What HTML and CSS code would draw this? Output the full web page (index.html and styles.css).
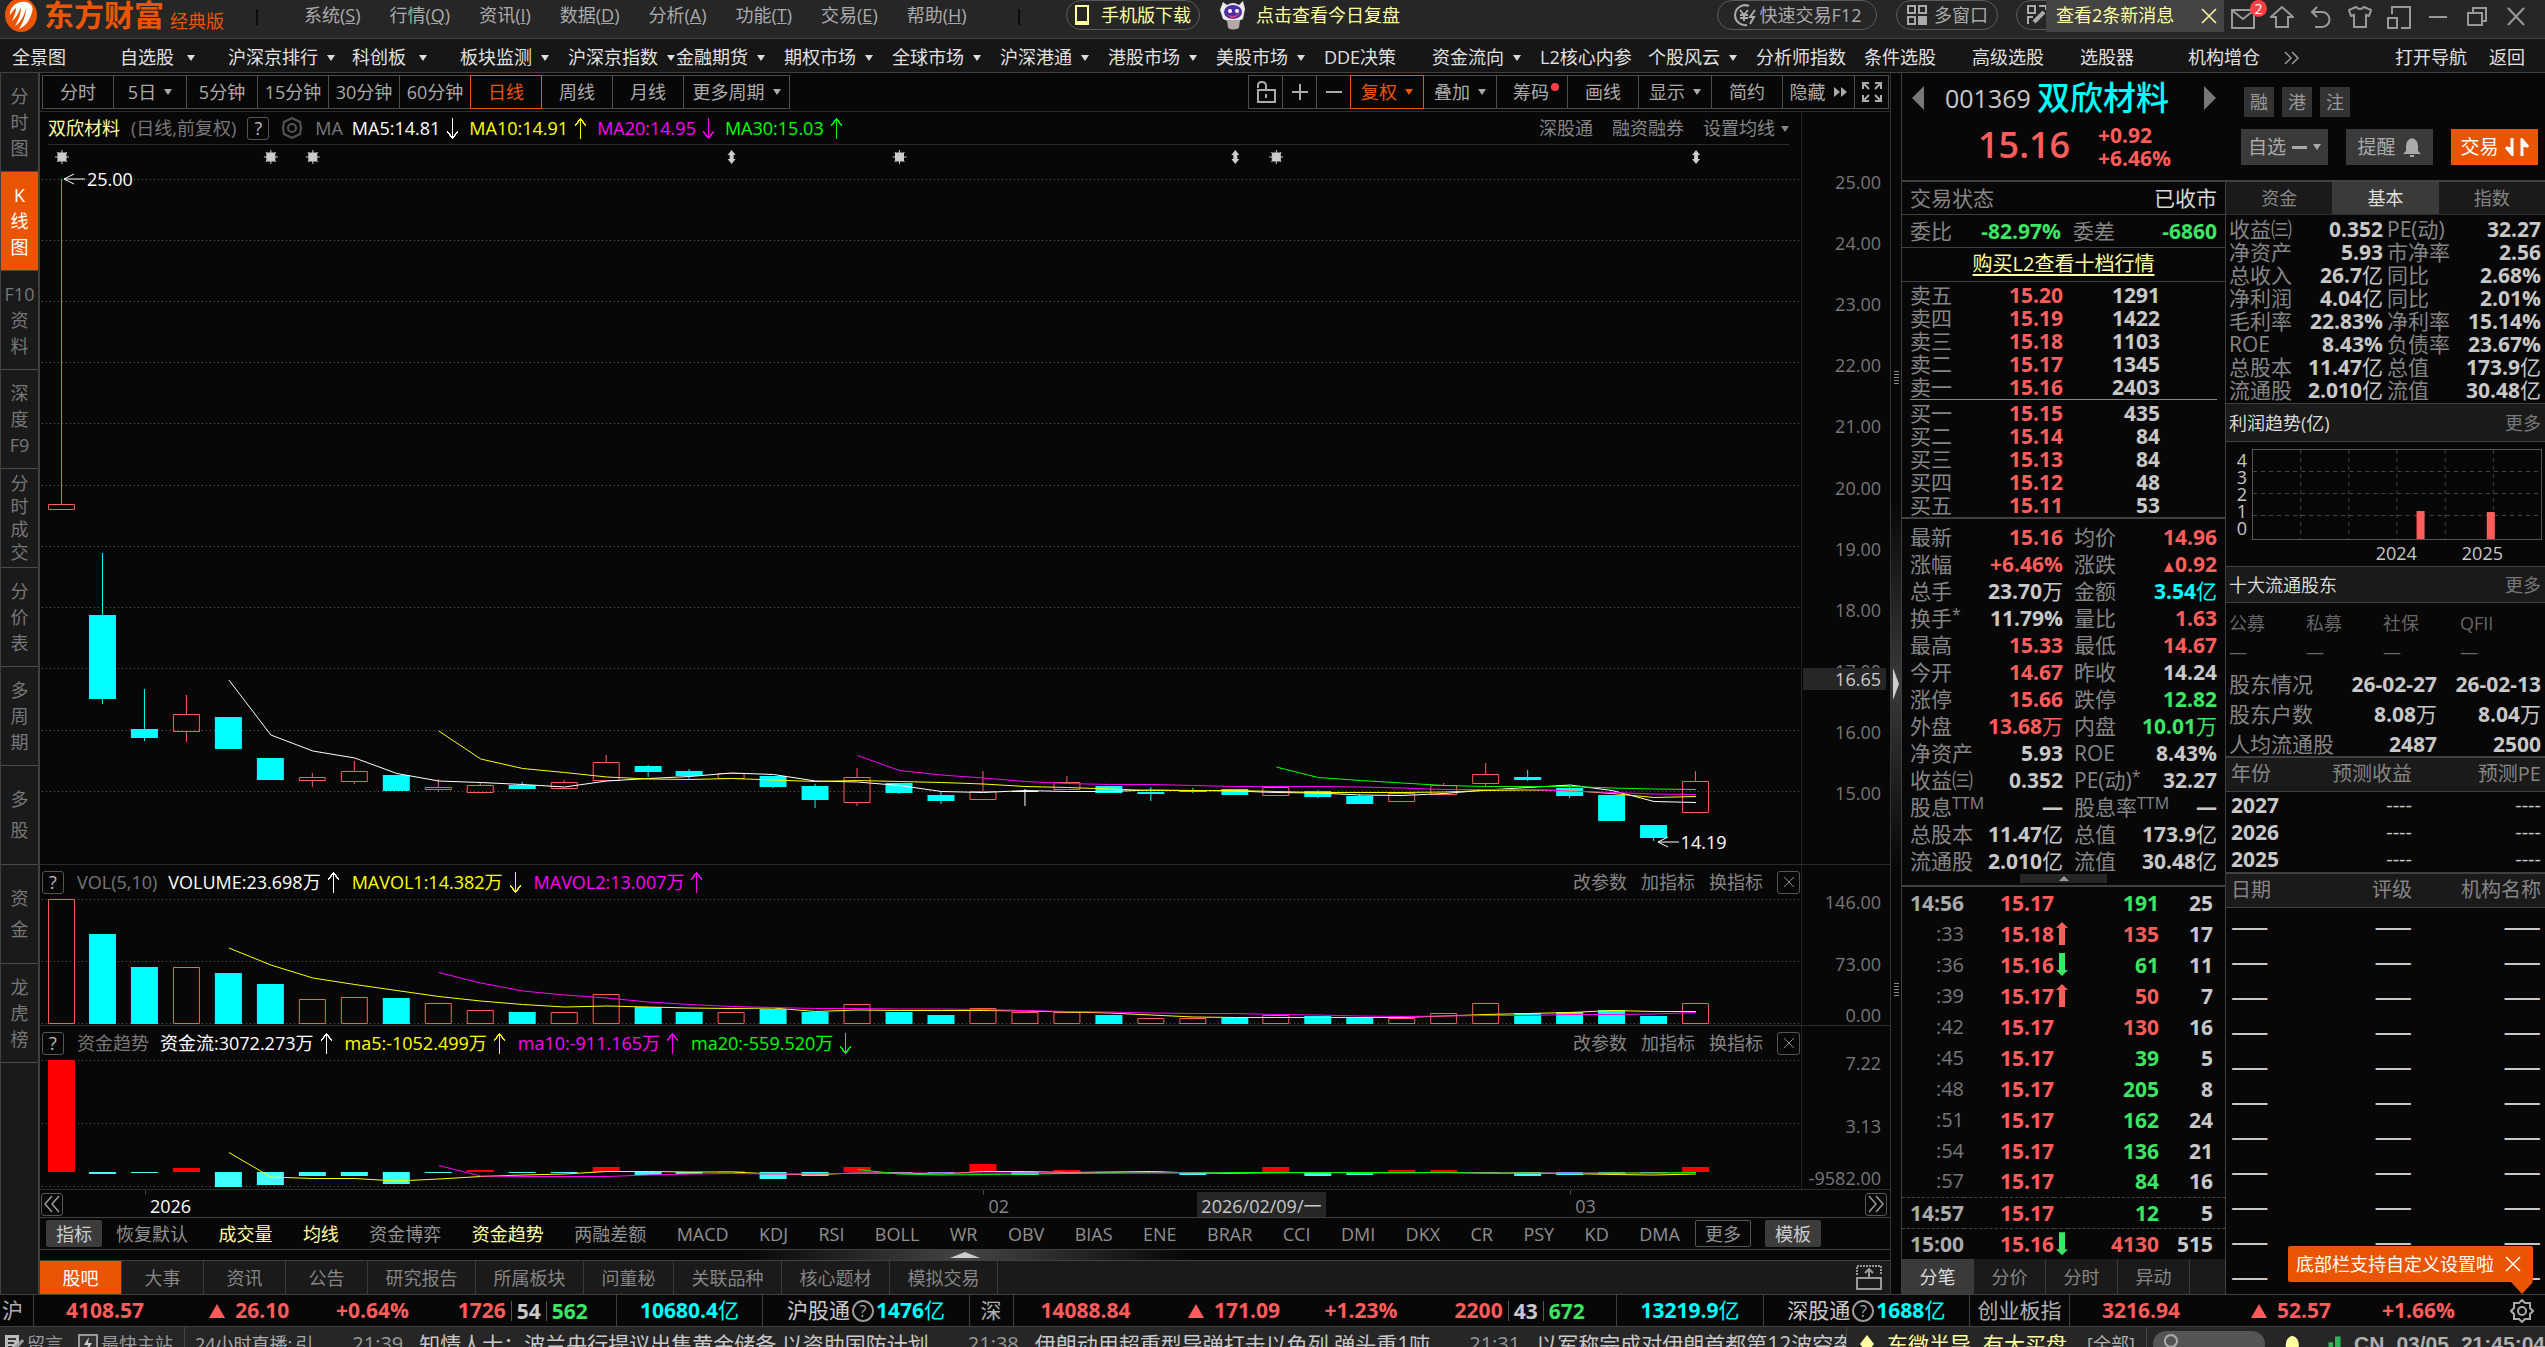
FILE: index.html
```html
<!DOCTYPE html>
<html lang="zh-CN">
<head>
<meta charset="utf-8">
<title>东方财富 经典版</title>
<link rel="stylesheet" href="styles.css">
</head>
<body>
<div class="app">
<header class="topbar">
  <svg class="logo" viewBox="0 0 34 34"><ellipse cx="17" cy="15" rx="16" ry="17" fill="#ea5504"/><path d="M6 15C5 8 13 0 22 2C27 3 30 7 28 12C26 20 22 26 15 29C20 21 22 14 22 8C20 16 17 22 11 26C15 19 17 13 17 7C14 14 12 18 8 21C11 15 12 11 12 8C9 10 8 12 6 15Z" fill="#fff"/></svg>
  <strong class="brand">东方财富</strong><span class="edition">经典版</span>
  <i class="bar"></i>
  <nav class="menu">
    <a href="#">系统(<u>S</u>)</a><a href="#">行情(<u>Q</u>)</a><a href="#">资讯(<u>I</u>)</a><a href="#">数据(<u>D</u>)</a><a href="#">分析(<u>A</u>)</a><a href="#">功能(<u>T</u>)</a><a href="#">交易(<u>E</u>)</a><a href="#">帮助(<u>H</u>)</a>
  </nav>
  <i class="bar"></i>
  <button class="pill pill-phone"><svg width="14" height="20" viewBox="0 0 14 20"><path d="M1 1H13V17H1ZM1 17H13V19H1Z" fill="none" stroke="#ffffa0" stroke-width="2"/></svg>手机版下载</button>
  <a class="review" href="#"><svg width="30" height="30" viewBox="0 0 30 30"><path d="M5 2L9 5Q15 1 21 5L25 1L27 9L25 19Q15 25 5 19L2 10Z" fill="#ece8ee"/><path d="M9 20L22 20L21 28Q15 31 10 28Z" fill="#b5a7a5"/><ellipse cx="15" cy="12" rx="9" ry="7" fill="#4a2fa0"/><path d="M8 13Q15 20 23 11Q19 19 13 18Z" fill="#d2407a"/><circle cx="12" cy="11" r="2" fill="#fff"/><circle cx="19" cy="11" r="2" fill="#fff"/></svg>点击查看今日复盘</a>
  <div class="top-right">
    <button class="pill pill-trade"><svg width="24" height="24" viewBox="0 0 24 24" fill="none" stroke="#aaa" stroke-width="2"><path d="M16 3A10 10 0 1 0 14 22"/><path d="M7 7L11 12L15 7M11 12V18M7 12H15M7 15H15M22 7L17 14H21L17 21"/></svg>快速交易F12</button>
    <button class="pill pill-multi"><svg width="22" height="22" viewBox="0 0 22 22" fill="none" stroke="#aaa" stroke-width="2"><path d="M2 2H9V9H2ZM13 2H20V9H13ZM2 13H9V20H2Z"/><path d="M13 13H20V20H13Z" fill="#aaa"/></svg>多窗口</button>
    <div class="notice-wrap">
      <button class="pill pill-edit" aria-label="编辑"><svg width="22" height="22" viewBox="0 0 22 22" fill="none" stroke="#aaa" stroke-width="2"><path d="M2 2H9V9H2ZM13 2H20V6M2 20V13H7"/><path d="M8 18L18 8" stroke-width="4"/></svg></button>
      <div class="notice"><span>查看2条新消息</span><button class="plain" aria-label="关闭"><svg width="16" height="16" viewBox="0 0 16 16"><path d="M1 1L15 15M15 1L1 15" stroke="#ffffa0" stroke-width="1.5"/></svg></button></div>
    </div>
    <div class="win-icons">
      <button class="plain mail" aria-label="消息"><svg viewBox="0 0 24 24"><path d="M1 5H23V23H1ZM2 6L12 14L22 6"/></svg><em>2</em></button>
      <button class="plain" aria-label="首页"><svg viewBox="0 0 24 24"><path d="M12 2L1 12H6V22H18V12H23Z"/></svg></button>
      <button class="plain" aria-label="后退"><svg viewBox="0 0 24 24"><path d="M3 7H13A7 7 0 0 1 13 22H6M8 2L3 7L8 12"/></svg></button>
      <button class="plain" aria-label="皮肤"><svg viewBox="0 0 24 24"><path d="M8 2Q12 6 16 2L23 5L21 11L18 10V22H6V10L3 11L1 5Z"/></svg></button>
      <button class="plain" aria-label="布局"><svg viewBox="0 0 24 24"><path d="M5 9V2H23V23H14M1 13H10V23H1Z"/></svg></button>
      <button class="plain" aria-label="最小化"><svg viewBox="0 0 24 24"><path d="M3 12H21"/></svg></button>
      <button class="plain" aria-label="还原"><svg viewBox="0 0 24 24"><path d="M3 8H17V20H3ZM8 8V3H21V16H17"/></svg></button>
      <button class="plain" aria-label="关闭"><svg viewBox="0 0 24 24"><path d="M4 3L20 20M20 3L4 20"/></svg></button>
    </div>
  </div>
</header>

<nav class="market-nav">
  <a href="#">全景图</a><a href="#" class="drop far">自选股</a><a href="#" class="drop wide">沪深京排行</a><a href="#" class="drop far">科创板</a><a href="#" class="drop">板块监测</a><a href="#" class="drop">沪深京指数</a><a href="#" class="drop">金融期货</a><a href="#" class="drop">期权市场</a><a href="#" class="drop">全球市场</a><a href="#" class="drop">沪深港通</a><a href="#" class="drop">港股市场</a><a href="#" class="drop">美股市场</a><a href="#">DDE决策</a><a href="#" class="drop">资金流向</a><a href="#">L2核心内参</a><a href="#" class="drop">个股风云</a><a href="#">分析师指数</a><a href="#">条件选股</a><a href="#">高级选股</a><a href="#">选股器</a><a href="#">机构增仓</a>
  <button class="plain more" aria-label="更多"><svg width="16" height="14" viewBox="0 0 16 14"><path d="M1 1L7 7L1 13M8 1L14 7L8 13" fill="none" stroke="#999" stroke-width="1.5"/></svg></button>
  <span class="nav-end"><a href="#">打开导航</a><a href="#">返回</a></span>
</nav>

<main class="main">
  <aside class="rail">
    <a href="#">分<br>时<br>图</a>
    <a href="#" class="on">K<br>线<br>图</a>
    <a href="#">F10<br>资<br>料</a>
    <a href="#">深<br>度<br>F9</a>
    <a href="#" class="four">分<br>时<br>成<br>交</a>
    <a href="#">分<br>价<br>表</a>
    <a href="#">多<br>周<br>期</a>
    <a href="#" class="two">多<br>股</a>
    <a href="#" class="two">资<br>金</a>
    <a href="#">龙<br>虎<br>榜</a>
  </aside>

  <section class="charts">
    <div class="toolbar">
      <div class="seg">
        <button>分时</button><button class="w73">5日<i class="caret"></i></button><button>5分钟</button><button>15分钟</button><button>30分钟</button><button>60分钟</button><button class="on">日线</button><button>周线</button><button>月线</button><button class="w106">更多周期<i class="caret"></i></button>
      </div>
      <div class="seg">
        <button class="sq" aria-label="锁定"><svg width="22" height="24" viewBox="0 0 22 24" fill="none" stroke="#aaa" stroke-width="2"><path d="M3 10H20V22H3ZM11 14V18M3 8V5Q3 2 7 2Q11 2 11 6V10"/></svg></button><button class="sq" aria-label="放大"><svg width="18" height="18" viewBox="0 0 18 18"><path d="M9 1V17M1 9H17" stroke="#aaa" stroke-width="2"/></svg></button><button class="sq" aria-label="缩小"><svg width="18" height="18" viewBox="0 0 18 18"><path d="M1 9H17" stroke="#aaa" stroke-width="2"/></svg></button><button class="w73 on">复权<i class="caret"></i></button><button class="w73">叠加<i class="caret"></i></button><button class="dot">筹码</button><button>画线</button><button class="w73">显示<i class="caret"></i></button><button>简约</button><button class="w72">隐藏<svg width="14" height="10" viewBox="0 0 14 10"><path d="M0 0L6 5L0 10ZM7 0L13 5L7 10Z" fill="#aaa"/></svg></button><button class="sq" aria-label="全屏"><svg width="22" height="22" viewBox="0 0 22 22" fill="none" stroke="#aaa" stroke-width="2"><path d="M2 8V2H8M2 2L8 8M14 2H20V8M20 2L14 8M2 14V20H8M2 20L8 14M20 14V20H14M20 20L14 14"/></svg></button>
      </div>
    </div>

    <div class="panel panel-k">
      <div class="plot">
        <div class="legend ruled">
          <span class="pale">双欣材料</span><span class="dim">(日线,前复权)</span><button class="q">?</button>
          <svg class="gear" viewBox="0 0 24 24"><path d="M12 2L16 4L20 6L21 12L20 18L16 20L12 22L8 20L4 18L3 12L4 6L8 4Z"/><circle cx="12" cy="12" r="4"/></svg>
          <span class="dim">MA</span><span class="white arrow down">MA5:14.81</span><span class="yellow arrow up">MA10:14.91</span><span class="magenta arrow down">MA20:14.95</span><span class="lime arrow up">MA30:15.03</span>
          <span class="tools wide"><a href="#">深股通</a><a href="#">融资融券</a><a href="#">设置均线<i class="caret"></i></a></span>
        </div>
        <div class="canvas">
          <svg id="kline" viewBox="40 145 1762 719" preserveAspectRatio="none"></svg>
          <span class="note note-high"><svg width="22" height="14" viewBox="0 0 22 14"><path d="M11 2L1 7L11 12M1 7H22"/></svg>25.00</span>
          <span class="note note-low"><svg width="22" height="14" viewBox="0 0 22 14"><path d="M11 2L1 7L11 12M1 7H22"/></svg>14.19</span>
        </div>
      </div>
      <div class="axis axis-k"><span>25.00</span><span>24.00</span><span>23.00</span><span>22.00</span><span>21.00</span><span>20.00</span><span>19.00</span><span>18.00</span><span>17.00</span><span>16.00</span><span>15.00</span><b class="cross">16.65</b></div>
    </div>

    <div class="panel">
      <div class="plot">
        <div class="legend">
          <button class="q">?</button><span class="dim">VOL(5,10)</span><span class="white arrow up">VOLUME:23.698万</span><span class="yellow arrow down">MAVOL1:14.382万</span><span class="magenta arrow up">MAVOL2:13.007万</span>
          <span class="tools"><a href="#">改参数</a><a href="#">加指标</a><a href="#">换指标</a><button class="q" aria-label="关闭"><svg width="12" height="12" viewBox="0 0 12 12"><path d="M1 1L11 11M11 1L1 11" stroke="#888"/></svg></button></span>
        </div>
        <div class="canvas vol"><svg id="volume" viewBox="40 899 1762 126" preserveAspectRatio="none"></svg></div>
      </div>
      <div class="axis axis-vol"><span>146.00</span><span>73.00</span><span>0.00</span></div>
    </div>

    <div class="panel">
      <div class="plot">
        <div class="legend">
          <button class="q">?</button><span class="dim">资金趋势</span><span class="white arrow up">资金流:3072.273万</span><span class="yellow arrow up">ma5:-1052.499万</span><span class="magenta arrow up">ma10:-911.165万</span><span class="lime arrow down">ma20:-559.520万</span>
          <span class="tools"><a href="#">改参数</a><a href="#">加指标</a><a href="#">换指标</a><button class="q" aria-label="关闭"><svg width="12" height="12" viewBox="0 0 12 12"><path d="M1 1L11 11M11 1L1 11" stroke="#888"/></svg></button></span>
        </div>
        <div class="canvas flow"><svg id="flow" viewBox="40 1060 1762 129" preserveAspectRatio="none"></svg></div>
      </div>
      <div class="axis axis-flow"><span>7.22</span><span>3.13</span><span>-9582.00</span></div>
    </div>

    <div class="dates">
      <button class="q" aria-label="向前"><svg width="16" height="18" viewBox="0 0 16 18"><path d="M8 1L1 9L8 17M15 1L8 9L15 17" fill="none" stroke="#999" stroke-width="1.5"/></svg></button>
      <span class="d-year">2026</span><span class="d-feb">02</span><span class="d-sel">2026/02/09/一</span><span class="d-mar">03</span>
      <button class="q" aria-label="向后"><svg width="16" height="18" viewBox="0 0 16 18"><path d="M1 1L8 9L1 17M8 1L15 9L8 17" fill="none" stroke="#999" stroke-width="1.5"/></svg></button>
    </div>

    <div class="indicators">
      <button class="solid">指标</button>
      <div class="ind-list"><a href="#">恢复默认</a><a href="#" class="pale">成交量</a><a href="#" class="pale">均线</a><a href="#">资金博弈</a><a href="#" class="pale">资金趋势</a><a href="#">两融差额</a><a href="#">MACD</a><a href="#">KDJ</a><a href="#">RSI</a><a href="#">BOLL</a><a href="#">WR</a><a href="#">OBV</a><a href="#">BIAS</a><a href="#">ENE</a><a href="#">BRAR</a><a href="#">CCI</a><a href="#">DMI</a><a href="#">DKX</a><a href="#">CR</a><a href="#">PSY</a><a href="#">KD</a><a href="#">DMA</a></div>
      <button class="outline">更多</button><button class="solid">模板</button>
    </div>
    <div class="splitter"><i></i></div>
    <div class="tabs">
      <button class="on">股吧</button><button>大事</button><button>资讯</button><button>公告</button><button class="four">研究报告</button><button class="four">所属板块</button><button class="three">问董秘</button><button class="four">关联品种</button><button class="four">核心题材</button><button class="four">模拟交易</button>
      <svg class="export" width="26" height="26" viewBox="0 0 26 26" fill="none" stroke="#999" stroke-width="2"><path d="M1 10V1H25V10" stroke-dasharray="2 1"/><path d="M1 13H25V24H1ZM13 13V4M9 8L13 4L17 8"/></svg>
    </div>
  </section>

  <div class="divider"><i class="grip"></i><i class="fold"></i><i class="grip"></i></div>

  <section class="side">
    <div class="stock-head">
      <div class="ident">
        <div class="name-row"><button class="plain prev" aria-label="上一只"></button><span class="code">001369</span><h1>双欣材料</h1><button class="plain next" aria-label="下一只"></button></div>
        <div class="price-row up"><span class="last">15.16</span><span class="chg">+0.92<br>+6.46%</span></div>
      </div>
      <div class="actions">
        <div class="tags"><span>融</span><span>港</span><span>注</span></div>
        <div class="btns"><button>自选<i class="minus"></i><i class="caret"></i></button><button>提醒<svg width="20" height="20" viewBox="0 0 20 20"><path d="M10 1Q16 3 16 9V14L19 17H1L4 14V9Q4 3 10 1ZM8 18H12V20H8Z" fill="#aaa"/></svg></button><button class="trade">交易<svg width="24" height="18" viewBox="0 0 24 18"><path d="M7 0V15M1 9L7 16L7 9M17 18V3M23 9L17 2L17 9" fill="#fff" stroke="#fff" stroke-width="3"/></svg></button></div>
      </div>
    </div>

    <div class="quote-col">
      <div class="line-row"><span>交易状态</span><span class="val">已收市</span></div>
      <div class="line-row four"><span>委比</span><b class="down">-82.97%</b><span>委差</span><b class="down">-6860</b></div>
      <div class="line-row center"><a href="#">购买L2查看十档行情</a></div>
      <table class="book">
        <tr><th>卖五</th><td>15.20</td><td>1291</td></tr>
        <tr><th>卖四</th><td>15.19</td><td>1422</td></tr>
        <tr><th>卖三</th><td>15.18</td><td>1103</td></tr>
        <tr><th>卖二</th><td>15.17</td><td>1345</td></tr>
        <tr><th>卖一</th><td>15.16</td><td>2403</td></tr>
      </table>
      <hr>
      <table class="book buy">
        <tr><th>买一</th><td>15.15</td><td>435</td></tr>
        <tr><th>买二</th><td>15.14</td><td>84</td></tr>
        <tr><th>买三</th><td>15.13</td><td>84</td></tr>
        <tr><th>买四</th><td>15.12</td><td>48</td></tr>
        <tr><th>买五</th><td>15.11</td><td>53</td></tr>
      </table>
      <table class="facts">
        <tr><th>最新</th><td class="up">15.16</td><th>均价</th><td class="up">14.96</td></tr>
        <tr><th>涨幅</th><td class="up">+6.46%</td><th>涨跌</th><td class="up"><i class="tri small"></i>0.92</td></tr>
        <tr><th>总手</th><td>23.70<s>万</s></td><th>金额</th><td class="cyan">3.54<s>亿</s></td></tr>
        <tr><th>换手<sup>*</sup></th><td>11.79%</td><th>量比</th><td class="up">1.63</td></tr>
        <tr><th>最高</th><td class="up">15.33</td><th>最低</th><td class="up">14.67</td></tr>
        <tr><th>今开</th><td class="up">14.67</td><th>昨收</th><td>14.24</td></tr>
        <tr><th>涨停</th><td class="up">15.66</td><th>跌停</th><td class="down">12.82</td></tr>
        <tr><th>外盘</th><td class="up">13.68<s>万</s></td><th>内盘</th><td class="down">10.01<s>万</s></td></tr>
        <tr><th>净资产</th><td>5.93</td><th>ROE</th><td>8.43%</td></tr>
        <tr><th>收益㈢</th><td>0.352</td><th>PE(动)<sup>*</sup></th><td>32.27</td></tr>
        <tr><th>股息<sup>TTM</sup></th><td>—</td><th>股息率<sup>TTM</sup></th><td>—</td></tr>
        <tr><th>总股本</th><td>11.47<s>亿</s></td><th>总值</th><td>173.9<s>亿</s></td></tr>
        <tr><th>流通股</th><td>2.010<s>亿</s></td><th>流值</th><td>30.48<s>亿</s></td></tr>
      </table>
      <div class="collapse"><button class="plain" aria-label="收起"><i></i></button></div>
      <table class="ticks">
        <tr class="minute"><td>14:56</td><td>15.17</td><td></td><td class="down">191</td><td>25</td></tr>
        <tr><td>:33</td><td>15.18</td><td><i class="tick-up"></i></td><td class="up">135</td><td>17</td></tr>
        <tr><td>:36</td><td>15.16</td><td><i class="tick-down"></i></td><td class="down">61</td><td>11</td></tr>
        <tr><td>:39</td><td>15.17</td><td><i class="tick-up"></i></td><td class="up">50</td><td>7</td></tr>
        <tr><td>:42</td><td>15.17</td><td></td><td class="up">130</td><td>16</td></tr>
        <tr><td>:45</td><td>15.17</td><td></td><td class="down">39</td><td>5</td></tr>
        <tr><td>:48</td><td>15.17</td><td></td><td class="down">205</td><td>8</td></tr>
        <tr><td>:51</td><td>15.17</td><td></td><td class="down">162</td><td>24</td></tr>
        <tr><td>:54</td><td>15.17</td><td></td><td class="down">136</td><td>21</td></tr>
        <tr><td>:57</td><td>15.17</td><td></td><td class="down">84</td><td>16</td></tr>
        <tr class="minute"><td>14:57</td><td>15.17</td><td></td><td class="down">12</td><td>5</td></tr>
        <tr class="minute"><td>15:00</td><td>15.16</td><td><i class="tick-down"></i></td><td class="up">4130</td><td>515</td></tr>
      </table>
      <div class="sub-tabs"><button class="on">分笔</button><button>分价</button><button>分时</button><button>异动</button></div>
    </div>

    <div class="info-col">
      <div class="info-tabs"><button>资金</button><button class="on">基本</button><button>指数</button></div>
      <table class="basic">
        <tr><th>收益㈢</th><td>0.352</td><th>PE(动)</th><td>32.27</td></tr>
        <tr><th>净资产</th><td>5.93</td><th>市净率</th><td>2.56</td></tr>
        <tr><th>总收入</th><td>26.7<s>亿</s></td><th>同比</th><td>2.68%</td></tr>
        <tr><th>净利润</th><td>4.04<s>亿</s></td><th>同比</th><td>2.01%</td></tr>
        <tr><th>毛利率</th><td>22.83%</td><th>净利率</th><td>15.14%</td></tr>
        <tr><th>ROE</th><td>8.43%</td><th>负债率</th><td>23.67%</td></tr>
        <tr><th>总股本</th><td>11.47<s>亿</s></td><th>总值</th><td>173.9<s>亿</s></td></tr>
        <tr><th>流通股</th><td>2.010<s>亿</s></td><th>流值</th><td>30.48<s>亿</s></td></tr>
      </table>
      <div class="sec-head"><span>利润趋势(亿)</span><a href="#">更多</a></div>
      <div class="profit">
        <div class="profit-y"><span>4</span><span>3</span><span>2</span><span>1</span><span>0</span></div>
        <svg viewBox="0 0 290 91" preserveAspectRatio="none"><g stroke="#444" stroke-dasharray="4 4"><path d="M1 22.5H289M1 44.5H289M1 66.5H289M48.5 1V90M96.5 1V90M144.5 1V90M192.5 1V90M240.5 1V90"/></g><path d="M.5 .5H288.5V90.5H.5Z" fill="none" stroke="#555"/><path d="M164 62H172V90H164ZM234 63H242V90H234Z" fill="#ff5c5c"/></svg>
        <div class="profit-x"><span>2024</span><span>2025</span></div>
      </div>
      <div class="sec-head holders-head"><span>十大流通股东</span><a href="#">更多</a></div>
      <div class="holders"><span>公募</span><span>私募</span><span>社保</span><span>QFII</span><span>—</span><span>—</span><span>—</span><span>—</span></div>
      <table class="owners">
        <tr><th>股东情况</th><td>26-02-27</td><td>26-02-13</td></tr>
        <tr><th>股东户数</th><td>8.08<s>万</s></td><td>8.04<s>万</s></td></tr>
        <tr><th>人均流通股</th><td>2487</td><td>2500</td></tr>
      </table>
      <table class="forecast">
        <thead><tr><th>年份</th><th>预测收益</th><th>预测PE</th></tr></thead>
        <tbody><tr><td>2027</td><td>----</td><td>----</td></tr><tr><td>2026</td><td>----</td><td>----</td></tr><tr><td>2025</td><td>----</td><td>----</td></tr></tbody>
      </table>
      <table class="forecast ratings">
        <thead><tr><th>日期</th><th>评级</th><th>机构名称</th></tr></thead>
        <tbody>
          <tr><td>——</td><td>——</td><td>——</td></tr><tr><td>——</td><td>——</td><td>——</td></tr><tr><td>——</td><td>——</td><td>——</td></tr><tr><td>——</td><td>——</td><td>——</td></tr><tr><td>——</td><td>——</td><td>——</td></tr><tr><td>——</td><td>——</td><td>——</td></tr><tr><td>——</td><td>——</td><td>——</td></tr><tr><td>——</td><td>——</td><td>——</td></tr><tr><td>——</td><td>——</td><td>——</td></tr><tr><td>——</td><td>——</td><td>——</td></tr><tr><td>——</td><td>——</td><td>——</td></tr>
        </tbody>
      </table>
    </div>
  </section>
</main>

<div class="indices">
  <div class="cell nm first">沪</div>
  <div class="cell quote up"><b>4108.57</b><b><i class="tri"></i>26.10</b><b>+0.64%</b></div>
  <div class="cell breadth"><b class="up">1726</b><b>54</b><b class="down">562</b></div>
  <div class="cell amount cyan"><b>10680.4</b>亿</div>
  <div class="cell link">沪股通<i class="help">?</i><span class="cyan"><b>1476</b>亿</span></div>
  <div class="cell nm">深</div>
  <div class="cell quote big up"><b>14088.84</b><b><i class="tri"></i>171.09</b><b>+1.23%</b></div>
  <div class="cell breadth big"><b class="up">2200</b><b>43</b><b class="down">672</b></div>
  <div class="cell amount cyan"><b>13219.9</b>亿</div>
  <div class="cell link">深股通<i class="help">?</i><span class="cyan"><b>1688</b>亿</span></div>
  <div class="cell nm">创业板指</div>
  <div class="cell quote end up"><b>3216.94</b><b><i class="tri"></i>52.57</b><b>+1.66%</b></div>
  <button class="plain set" aria-label="设置"><svg class="gear lit" viewBox="0 0 24 24"><path d="M12 1L15 4H20L20 9L23 12L20 15V20H15L12 23L9 20H4V15L1 12L4 9V4H9Z"/><circle cx="12" cy="12" r="4"/></svg></button>
  <div class="callout"><span>底部栏支持自定义设置啦</span><button class="plain" aria-label="关闭"><svg width="16" height="16" viewBox="0 0 16 16"><path d="M1 1L15 15M15 1L1 15" stroke="#fff" stroke-width="1.5"/></svg></button></div>
</div>

<footer class="status">
  <div class="st st-links"><svg width="20" height="20" viewBox="0 0 20 20"><path d="M1 1H15V19H1Z" fill="#bbb"/><path d="M4 5H12M4 9H10M4 13H8" stroke="#333" stroke-width="2"/><path d="M9 17L19 6" stroke="#999" stroke-width="3"/></svg><span>留言</span><svg width="20" height="20" viewBox="0 0 20 20"><path d="M1 1H19V19H1Z" fill="#333" stroke="#999" stroke-width="2"/><path d="M11 3L6 11H10L8 18L14 9H10Z" fill="#ccc"/></svg><span>最快主站</span></div>
  <div class="st st-news"><span class="live">24小时直播:</span><span class="roll">引</span><time>21:39</time><span>知情人士：波兰央行提议出售黄金储备 以资助国防计划</span><time>21:38</time><span>伊朗动用超重型导弹打击以色列 弹头重1吨</span><time>21:31</time><span class="clip">以军称完成对伊朗首都第12波空袭</span></div>
  <div class="st st-alert"><svg width="16" height="20" viewBox="0 0 16 20"><path d="M8 1L15 10L8 19L1 10Z" fill="#ffffa0"/></svg><span>东微半导</span><span>有大买盘</span><span class="all">[全部]</span></div>
  <div class="st st-end"><label class="find"><svg width="16" height="20" viewBox="0 0 16 20"><path d="M8 1A6 6 0 1 1 7.9 1M8 13V19" fill="none" stroke="#aaa" stroke-width="2"/></svg><input type="search" aria-label="搜索"></label><svg width="20" height="20" viewBox="0 0 20 20"><path d="M10 1Q17 3 17 11V17L20 20H0L3 17V11Q3 3 10 1Z" fill="#ffffa0"/></svg><svg width="22" height="20" viewBox="0 0 22 20"><path d="M0 14H5V20H0ZM7 8H12V20H7ZM14 2H20V20H14Z" fill="#2fb457"/></svg><b>CN</b><b>03/05</b><b>21:45:04</b></div>
</footer>
</div>
<script src="charts.js"></script>
</body>
</html>
```
FILE: styles.css
```css
:root {
  --bg: #070707;
  --line: #404040;
  --dim: #858585;
  --text: #c8c8c8;
  --up: #ff5c5c;
  --down: #3ce664;
  --cyan: #00ffff;
  --pale: #ffffa0;
  --orange: #ea5504;
}
* { box-sizing: border-box; }
body {
  margin: 0;
  background: var(--bg);
  color: var(--text);
  font: 18px/24px "Open Sans", "Noto Sans CJK SC", sans-serif;
}
a { color: inherit; text-decoration: none; }
i, em { font-style: normal; }
s { text-decoration: none; font-weight: 400; }
button {
  font: inherit;
  color: inherit;
  background: none;
  border: 0;
  padding: 0;
  white-space: nowrap;
}
.plain { display: flex; align-items: center; justify-content: center; }
table { border-collapse: collapse; width: 100%; table-layout: fixed; }
th, td { padding: 0; font-weight: 400; white-space: nowrap; }
.up { color: var(--up); }
.down { color: var(--down); }
.cyan { color: var(--cyan); }
.pale { color: var(--pale); }
.dim { color: #777; }
.white { color: #fff; }
.yellow { color: #ff0; }
.magenta { color: #f0f; }
.lime { color: #0f0; }
.caret {
  display: inline-block;
  border: 4px solid transparent;
  border-top: 6px solid currentColor;
  border-bottom: 0;
}
.app { display: flex; flex-direction: column; height: 100vh; overflow: hidden; white-space: nowrap; }

/* top bar */
.topbar {
  display: flex;
  flex: none;
  height: 39px;
  background: #262626;
  border-bottom: 1px solid var(--line);
  color: #aaa;
  line-height: 30px;
}
.logo { width: 34px; height: 34px; margin-left: 4px; }
.brand { width: 126px; margin-left: 6px; font-size: 30px; color: var(--orange); }
.edition { width: 86px; padding-top: 6px; color: var(--orange); }
.bar { width: 2px; height: 16px; margin-top: 9px; background: #0c0c0c; }
.menu { display: flex; gap: 29px; width: 760px; padding-left: 46px; }
.pill {
  display: flex;
  align-items: center;
  justify-content: center;
  gap: 6px;
  height: 30px;
  border: 1px solid #5a5a5a;
  border-radius: 15px;
  flex: none;
}
.pill-phone { width: 134px; margin-left: 46px; gap: 12px; color: var(--pale); }
.review { display: flex; gap: 8px; margin-left: 18px; color: var(--pale); }
.top-right { display: flex; margin-left: auto; }
.pill-trade { width: 160px; margin-right: 19px; gap: 3px; }
.pill-multi { width: 102px; margin-right: 18px; }
.notice-wrap { display: flex; }
.pill-edit { width: 60px; margin-right: -30px; justify-content: start; padding-left: 9px; }
.notice { display: flex; justify-content: space-between; width: 178px; height: 32px; padding: 0 7px 0 10px; background: #444; color: var(--pale); z-index: 1; }
.win-icons { display: flex; gap: 15px; padding: 4px 17px 0 7px; }
.win-icons .plain { position: relative; width: 24px; height: 26px; }
.win-icons svg { width: 24px; height: 24px; fill: none; stroke: #999; stroke-width: 2; }
.mail em { position: absolute; right: -12px; top: -4px; width: 17px; height: 17px; border-radius: 9px; background: #ff4040; color: #fff; font-size: 14px; line-height: 17px; text-align: center; }

/* market navigation */
.market-nav {
  display: flex;
  flex: none;
  height: 34px;
  padding: 0 20px 0 12px;
  background: #161616;
  border-bottom: 1px solid var(--line);
  color: #e0e0e0;
  line-height: 36px;
}
.market-nav > a { flex: 0 1 108px; }
.market-nav > a.wide { flex-basis: 124px; }
.drop::after {
  content: "";
  display: inline-block;
  margin: 0 0 3px 9px;
  border: 4px solid transparent;
  border-top: 6px solid #ddd;
  border-bottom: 0;
}
.drop.far::after { margin-left: 13px; }
.market-nav .more { margin: 12px 0 0 -12px; height: 14px; }
.nav-end { display: flex; gap: 22px; margin-left: auto; }

.main { display: flex; flex: 1; min-height: 0; }

/* left rail */
.rail { flex: none; width: 40px; background: #1a1a1a; border: solid var(--line); border-width: 0 2px 0 1px; color: #777; text-align: center; }
.rail a { display: flex; flex-direction: column; justify-content: center; height: 99px; border-bottom: 1px solid #4a4a4a; line-height: 26px; }
.rail a.on { background: var(--orange); color: #fff; }
.rail a.four { line-height: 23px; }
.rail a.two { line-height: 31px; }

/* chart area */
.charts { display: flex; flex-direction: column; flex: 1; min-width: 0; }
.toolbar { display: flex; justify-content: space-between; height: 39px; padding: 2px 1px 0 3px; border-bottom: 1px solid #2c2c2c; color: #aaa; }
.seg { display: flex; }
.seg button { display: flex; align-items: center; justify-content: center; gap: 8px; width: 72px; height: 34px; border: 1px solid #4c4c4c; margin-left: -1px; }
.seg button.w72 { width: 73px; }
.seg button.w73 { width: 74px; }
.seg button.w106 { width: 107px; }
.seg button.sq { width: 35px; }
.seg button.on { border-color: var(--orange); color: var(--orange); z-index: 1; }
.dot::after { content: ""; width: 8px; height: 8px; margin: -10px -8px 0 -6px; border-radius: 4px; background: #ff4040; }
.panel { display: grid; grid-template-columns: minmax(0, 1fr) 88px; border-bottom: 1px solid #2c2c2c; }
.panel-k { flex: 1; min-height: 0; }
.plot { display: flex; flex-direction: column; min-width: 0; min-height: 0; border-right: 1px solid #222; }
.legend { display: flex; align-items: center; gap: 13px; height: 34px; padding: 0 1px 0 2px; flex: none; }
.legend.ruled { gap: 11px; height: 33px; margin: 0 12px 0 8px; padding: 0; border-bottom: 1px solid #2c2c2c; }
.q { display: flex; align-items: center; justify-content: center; width: 22px; height: 23px; border: 1px solid #555; border-radius: 3px; color: #bbb; }
.gear { width: 24px; height: 24px; fill: none; stroke: #555; stroke-width: 2; }
.gear.lit { stroke: #aaa; }
.arrow { display: flex; align-items: center; gap: 7px; }
.arrow.white { color: #fff; }
.arrow.yellow { color: #ff0; }
.arrow.magenta { color: #f0f; }
.arrow.lime { color: #0f0; }
.arrow::after {
  content: "";
  width: 11px;
  height: 21px;
  background:
    linear-gradient(currentColor, currentColor) 5px 0 / 1px 100% no-repeat,
    linear-gradient(to top right, transparent 42%, currentColor 43% 57%, transparent 58%) 0 100% / 6px 8px no-repeat,
    linear-gradient(to top left, transparent 42%, currentColor 43% 57%, transparent 58%) 5px 100% / 6px 8px no-repeat;
}
.arrow.up::after { transform: rotate(180deg); }
.legend .dim + .arrow { margin-left: -2px; }
.tools { display: flex; align-items: center; gap: 14px; margin-left: auto; color: #858585; }
.tools.wide { gap: 19px; }
.tools .q { width: 23px; }
.tools .caret { margin: 0 0 3px 6px; }
.canvas { position: relative; flex: 1; min-height: 0; }
.canvas.vol { flex: 0 0 126px; }
.canvas.flow { flex: 0 0 129px; }
.canvas > svg { display: block; width: 100%; height: 100%; }
.canvas path { vector-effect: non-scaling-stroke; }
.note { position: absolute; display: flex; align-items: center; gap: 2px; color: #fff; transform: translateY(-50%); }
.note svg { fill: none; stroke: #fff; }
.note-high { left: 1.3%; top: 4.7%; }
.note-low { left: 91.8%; top: 96.9%; }
.axis { position: relative; padding-right: 9px; text-align: right; color: #777; }
.axis-k { display: flex; flex-direction: column; padding-top: 39px; padding-bottom: 40px; }
.axis-k span { display: flex; flex: 1; align-items: center; justify-content: flex-end; }
.cross { position: absolute; left: 1px; right: 4px; top: 74%; padding-right: 5px; background: #262626; color: #ccc; font-weight: 400; line-height: 22px; }
.axis-vol { display: grid; grid-template-rows: 62px 51px 22px; padding-top: 25px; }
.axis-flow { display: grid; grid-template-rows: 63px 52px 23px; padding-top: 25px; }
.axis-flow span { margin-left: -10px; }
.dates { display: grid; grid-template-columns: 104fr 839fr 214fr 373fr 295fr 23px; align-items: center; height: 28px; padding: 0 2px 0 1px; border-bottom: 1px solid var(--line); color: #858585; }
.dates span { height: 28px; padding: 4px 0 0 5px; background: linear-gradient(#444, #444) 0 0 / 1px 5px no-repeat; }
.dates .d-year { color: #fff; }
.dates .d-sel { justify-self: start; height: 25px; padding: 2px 4px 0; background: #262626; color: var(--text); }
.indicators { display: flex; align-items: center; height: 32px; padding: 0 69px 0 6px; border-bottom: 1px solid var(--line); color: #909090; }
.indicators button { width: 56px; height: 27px; border-radius: 2px; }
.ind-list { display: flex; flex: 1; justify-content: space-between; padding: 0 15px 0 14px; }
.solid { background: #3c3c3c; color: #ccc; }
.indicators .outline { border: 1px solid #555; margin-right: 14px; }
.splitter { display: flex; justify-content: center; align-items: center; height: 11px; background: linear-gradient(90deg, transparent 38%, #444 50%, transparent 62%); border-bottom: 1px solid var(--line); }
.splitter i { border: 15px solid transparent; border-top: 0; border-bottom: 6px solid #ccc; }
.tabs { display: flex; height: 33px; background: #1a1a1a; color: #858585; }
.tabs button { width: 82px; border-right: 1px solid #3a3a3a; }
.tabs .three { width: 90px; }
.tabs .four { width: 108px; }
.tabs .on { background: var(--orange); color: #fff; }
.export { margin: 4px 8px 0 auto; }

.divider { display: flex; flex: none; flex-direction: column; justify-content: space-between; align-items: center; width: 11px; padding: 298px 0; background: linear-gradient(#070707 35%, #3a3a3a 50%, #070707 65%); border-left: 1px solid #333; }
.grip { width: 5px; height: 13px; background: repeating-linear-gradient(#888 0 1px, transparent 1px 3px); }
.fold { border: 16px solid transparent; border-left: 6px solid #ccc; border-right: 0; }

/* right side */
.side { display: grid; grid-template-columns: 325px minmax(0, 1fr); grid-template-rows: 109px minmax(0, 1fr); width: 644px; flex: none; font-size: 21px; }
.stock-head { grid-column: 1 / 3; display: flex; border: solid var(--line); border-width: 0 0 2px 1px; }
.ident { width: 325px; padding-left: 10px; }
.name-row { display: flex; align-items: center; height: 50px; }
.prev { border: 12px solid transparent; border-right: 12px solid #777; border-left: 0; }
.next { border: 12px solid transparent; border-left: 12px solid #777; border-right: 0; margin-left: 35px; }
.code { width: 92px; margin-left: 21px; font-size: 25px; }
h1 { margin: 0; font-size: 33px; line-height: 40px; font-weight: 500; color: var(--cyan); }
.price-row { display: flex; align-items: center; height: 44px; padding-left: 66px; }
.last { width: 120px; font-size: 36px; font-weight: 600; }
.chg { padding-top: 4px; font-weight: 700; line-height: 23px; }
.actions { padding: 14px 0 0 14px; }
.tags { display: flex; gap: 8px; padding-left: 3px; font-size: 18px; }
.tags span { width: 30px; height: 30px; background: #333; color: #999; line-height: 30px; text-align: center; }
.btns { display: flex; gap: 18px; margin-top: 12px; font-size: 19px; }
.btns button { display: flex; align-items: center; justify-content: center; gap: 6px; width: 87px; height: 36px; background: #3a3a3a; color: #aaa; }
.btns .trade { background: var(--orange); color: #fff; }
.minus { width: 15px; height: 3px; background: #aaa; }

.quote-col { display: flex; flex-direction: column; border: solid var(--line); border-width: 0 1px; }
.line-row { display: flex; justify-content: space-between; flex: none; height: 33px; padding: 0 8px; border-bottom: 1px solid var(--line); color: var(--dim); line-height: 32px; }
.line-row.four { display: grid; grid-template-columns: 60px 91px 70px 1fr; }
.line-row.four span:nth-child(3) { padding-left: 12px; }
.line-row.four b { text-align: right; }
.line-row.center { justify-content: center; height: 34px; font-size: 20px; color: var(--pale); }
.line-row.center a { text-decoration: underline; text-underline-offset: 3px; }
.val { color: #d8d8d8; }
.side table { line-height: 22px; flex: none; }
.side th { color: var(--dim); text-align: left; }
.side td { font-weight: 700; text-align: right; }
.side .book { margin: 1px 0 1px 8px; width: 250px; }
.book tr { height: 23px; }
.book td:nth-child(2) { color: var(--up); }
.book th { width: 90px; }
.book td:nth-child(2) { width: 63px; }
.quote-col hr { width: 307px; margin: 0 8px; border: 0; border-top: 1px solid #888; }
.facts { border-top: 2px solid var(--line); border-collapse: separate; border-spacing: 0; padding: 4px 8px 0; }
.facts tr { height: 27px; }
.facts th { width: 70px; }
.facts th:nth-child(3) { width: 76px; padding-left: 11px; }
.facts td:nth-child(2) { width: 83px; }
sup { font-size: 16px; line-height: 0; vertical-align: 6px; }
.tri { display: inline-block; border: 8px solid transparent; border-top: 0; border-bottom: 14px solid var(--up); margin-right: 10px; }
.tri.small { border-width: 0 5px 10px; margin-right: 1px; }
.collapse { display: flex; justify-content: center; flex: none; height: 13px; border-bottom: 2px solid var(--line); }
.collapse button { width: 87px; height: 9px; background: #262626; }
.collapse i { border: 5px solid transparent; border-top: 0; border-bottom: 5px solid #999; }
.ticks tr { height: 31px; }
.ticks tr:nth-child(n+11) td { border-top: 1px dashed #444; }
.ticks td { color: var(--text); }
.ticks td:nth-child(1) { width: 62px; font-weight: 400; font-size: 20px; color: #777; }
.ticks .minute td:nth-child(1) { font-weight: 700; font-size: 21px; color: #aaa; }
.ticks td:nth-child(2) { width: 90px; color: var(--up); }
.ticks td:nth-child(3) { width: 14px; }
.ticks td:nth-child(4) { width: 91px; }
.ticks td.up { color: var(--up); }
.ticks td.down { color: var(--down); }
.ticks td:nth-child(5) { padding-right: 12px; }
.tick-up, .tick-down { display: block; width: 12px; height: 23px; margin-left: 2px; background: var(--up); clip-path: polygon(50% 0, 100% 26%, 75% 26%, 75% 100%, 25% 100%, 25% 26%, 0 26%); }
.tick-down { background: var(--down); clip-path: polygon(50% 100%, 100% 74%, 75% 74%, 75% 0, 25% 0, 25% 74%, 0 74%); }
.sub-tabs { display: flex; flex: 1; background: #1a1a1a; font-size: 18px; color: #858585; }
.sub-tabs button { width: 72px; border-right: 1px solid #3a3a3a; }
.sub-tabs .on, .info-tabs .on { background: #3a3a3a; color: #ddd; }

.info-col { display: flex; flex-direction: column; min-width: 0; overflow: hidden; }
.info-tabs { display: grid; grid-template-columns: 1fr 1fr 1fr; flex: none; height: 33px; background: #1a1a1a; border-bottom: 1px solid #2c2c2c; font-size: 18px; color: #858585; }
.basic { border-collapse: separate; border-spacing: 0; padding: 2px 4px 2px 3px; }
.basic tr { height: 23px; }
.basic th { width: 65px; }
.basic th:nth-child(3) { width: 70px; padding-left: 4px; }
.basic td:nth-child(2) { width: 89px; }
.sec-head { display: flex; justify-content: space-between; flex: none; height: 39px; padding: 0 4px 0 3px; background: #1a1a1a; border: solid var(--line); border-width: 1px 0; font-size: 18px; line-height: 38px; color: #d8d8d8; }
.sec-head a { color: #777; }
.holders-head { height: 37px; line-height: 36px; }
.profit { display: grid; grid-template-columns: 26px minmax(0, 1fr) 2px; grid-template-rows: 91px 26px; flex: none; height: 124px; padding-top: 7px; font-size: 18px; }
.profit svg { width: 100%; height: 91px; }
.profit-y { display: grid; grid-template-rows: repeat(5, 17px); padding: 3px 5px 0 0; text-align: right; line-height: 17px; }
.profit-x { grid-column: 1 / 4; display: flex; justify-content: flex-end; gap: 45px; padding-right: 42px; line-height: 26px; }
.holders { display: grid; grid-template-columns: repeat(4, 77px); grid-template-rows: 36px 30px; flex: none; padding-left: 3px; font-size: 18px; line-height: 40px; color: #666; }
.holders span:nth-child(n+5) { line-height: 26px; }
.owners { border-collapse: separate; border-spacing: 0; padding: 0 4px 0 3px; margin-bottom: -3px; }
.owners tr { height: 30px; }
.owners td:nth-child(2) { width: 102px; }
.owners td:nth-child(3) { width: 104px; }
.owners th { width: 106px; }
.forecast { font-size: 20px; }
.forecast thead tr { height: 34px; background: #1a1a1a; border: solid var(--line); border-width: 2px 0 1px; }
.forecast tbody tr { height: 27px; }
.forecast th, .forecast td { text-align: right; padding-right: 4px; }
.forecast th:first-child, .forecast td:first-child { width: 80px; text-align: left; padding-left: 5px; }
.forecast th:nth-child(2), .forecast td:nth-child(2) { width: 106px; padding-right: 0; }
.forecast tbody td { font-weight: 400; }
.forecast tbody td:first-child { font-weight: 700; font-size: 21px; }
.ratings tbody tr { height: 35px; }
.ratings tbody td, .ratings tbody td:first-child { font-family: "Noto Sans CJK SC", sans-serif; font-size: 22px; font-weight: 700; }

/* index bar */
.indices { position: relative; display: flex; flex: none; height: 33px; border-top: 1px solid var(--line); border-bottom: 1px solid var(--line); font-size: 21px; line-height: 31px; }
.cell { display: flex; align-items: center; border-right: 1px solid var(--line); }
.nm { justify-content: center; flex: none; width: 44px; color: #b0b0b0; }
.nm.first { width: 34px; justify-content: start; padding-left: 2px; }
.cell:nth-child(11) { width: 100px; }
.quote { display: grid; grid-template-columns: 176fr 127fr 94fr; flex: 397 1 0; min-width: 0; border: 0; }
.quote b:first-child { padding-left: 32px; }
.quote.big { grid-template-columns: 175fr 137fr 99fr; flex-grow: 411; }
.quote.big b:first-child { padding-left: 27px; }
.quote.end { grid-template-columns: 181px 131px 1fr; flex: 0 0 422px; }
.breadth { flex: 187 1 0; justify-content: center; gap: 5px; }
.breadth.big { flex-grow: 194; }
.breadth b + b { padding-left: 5px; border-left: 1px solid #555; line-height: 20px; }
.amount { flex: 146 1 0; justify-content: center; }
.link { flex: 206 1 0; justify-content: center; gap: 2px; }
.help { width: 22px; height: 22px; border: 2px solid #999; border-radius: 11px; font-size: 16px; line-height: 19px; text-align: center; color: #aaa; }
.set { width: 45px; margin: 0 8px 0 auto; padding-left: 14px; }
.callout { position: absolute; right: 12px; bottom: 44px; display: flex; align-items: center; gap: 11px; height: 36px; padding: 0 12px 0 8px; border-radius: 2px; background: var(--orange); color: #fff; font-size: 18px; }
.callout::after { content: ""; position: absolute; right: 0; top: 36px; border: 11px solid transparent; border-top: 12px solid var(--orange); border-bottom: 0; }

/* status line */
.status { display: flex; flex: none; height: 20px; overflow: hidden; background: #262626; line-height: 34px; font-size: 18px; }
.st { display: flex; height: 34px; align-items: center; border-right: 1px solid #444; flex: none; }
.st-links { width: 185px; gap: 3px; padding-left: 4px; color: #999; }
.st-links span + svg { margin-left: 12px; }
.st-news { flex: 1 1 0; min-width: 0; padding-left: 10px; overflow: hidden; font-size: 21px; }
.st-news .live, .st-news .roll { font-size: 18px; color: #aaa; }
.st-news time { margin-left: 39px; margin-right: 16px; font-size: 20px; color: #999; }
.st-news .roll { width: 18px; margin-left: 3px; }
.st-alert { width: 300px; gap: 12px; padding-left: 12px; color: var(--pale); font-size: 21px; }
.st-alert .all { margin-left: 8px; font-size: 18px; color: #b0b0b0; }
.st-end { width: 398px; gap: 12px; padding-left: 6px; border: 0; color: #b0b0b0; font: 700 21px/34px "Liberation Sans", sans-serif; }
.find { display: flex; align-items: center; width: 120px; height: 26px; margin-right: 6px; padding-left: 10px; border-radius: 13px; background: #555; }
.find input { width: 80px; height: 24px; border: 0; background: none; color: #ddd; }
.st-end label + svg + svg { margin-left: 8px; }
```
FILE: charts.js
```js
const STEP = 41.93;
const FIRST = 61.5;
const cx = i => Math.round(FIRST + STEP * i);
const SVG = "http://www.w3.org/2000/svg";

function add(svg, d, stroke, fill, dash) {
  const p = document.createElementNS(SVG, "path");
  p.setAttribute("d", d);
  p.setAttribute("stroke", stroke || "none");
  p.setAttribute("fill", fill || "none");
  if (dash) p.setAttribute("stroke-dasharray", dash);
  svg.appendChild(p);
}

function grid(svg, ys) {
  ys.forEach(y => add(svg, `M42 ${y}H1806`, "#606060", null, "1 3"));
}

function line(svg, start, ys, color) {
  add(svg, "M" + ys.map((y, k) => `${cx(start + k)} ${y}`).join("L"), color);
}

// each candle: direction, high, body top, body bottom, low
const candles = [
  ["r",179,504,509,509],["c",553,615,698,704],["c",689,729,737,741],["r",695,714,731,742],["c",717,717,748,749],
  ["c",758,758,779,780],["r",773,777,780,787],["r",761,771,781,784],["c",775,775,790,790],["r",779,787,789,792],
  ["r",782,785,792,793],["c",782,785,788,789],["r",780,782,788,788],["r",755,762,780,781],["c",765,766,771,777],
  ["c",769,771,775,779],["r",773,773,778,778],["c",776,776,786,788],["c",784,786,799,808],["r",768,777,802,806],
  ["c",783,783,792,794],["c",791,795,800,804],["r",771,791,799,800],["w",789,791,791,806],["r",776,782,789,789],
  ["c",786,786,792,792],["c",787,792,793,801],["c",788,790,791,793],["c",789,789,794,795],["r",787,787,795,796],
  ["c",790,791,796,798],["c",794,796,803,803],["r",793,793,801,801],["r",783,785,794,795],["r",763,774,783,786],
  ["c",770,777,779,781],["c",786,788,795,798],["c",795,795,820,821],["c",825,825,837,841],["r",771,781,812,812]
];
const paint = { r: "#ff5c5c", c: "#00ffff", w: "#ffffff" };

function box(svg, i, dir, top, bottom) {
  const x = cx(i);
  if (dir === "c") add(svg, `M${x - 14} ${top}H${x + 13}V${bottom + 1}H${x - 14}Z`, null, paint.c);
  else add(svg, `M${x - 13.5} ${top + .5}H${x + 12.5}V${bottom + .5}H${x - 13.5}Z`, paint[dir]);
}

const k = document.getElementById("kline");
grid(k, [179.5,240.5,301.5,362.5,423.5,485.5,546.5,607.5,668.5,730.5,791.5]);
candles.forEach(([dir, high, top, bottom, low], i) => {
  const x = cx(i) - .5;
  add(k, `M${x} ${high}V${top}M${x} ${bottom}V${low}`, paint[dir]);
  box(k, i, dir, top, bottom);
});
line(k, 4, [680,735,751,758,773.5,781,782.5,784.5,787,781,778.5,776.5,773,774.5,781,782,785.5,791.5,792.5,790.5,791.5,791.5,790,790.5,791,792.5,793,795,795.5,793.5,790,787.5,785,790.5,801.5,802.5], "#fff");
line(k, 9, [731,759,768.5,772.5,777,779,779.5,778.5,780,781.5,780.5,781.5,782.5,784,786.5,787.5,789,790.5,790.5,790.5,791.5,792.5,792.5,792.5,792,790.5,790,790.5,793.5,797.5,796.5], "#ff0");
line(k, 19, [755.5,770.5,775,778,781.5,783.5,784.5,784.5,785.5,786.5,786.5,786.5,787,788,789.5,789.5,789.5,791,792.5,794,794.5], "#f0f");
line(k, 29, [767,777.5,780.5,783,785.5,786.5,786.5,786.5,788,789,789.5], "#0f0");

[0,5,6,20,29].forEach(i => {
  const x = cx(i);
  add(k, `M${x} 150V164M${x - 7} 157H${x + 7}M${x - 5} 152L${x + 5} 162M${x + 5} 152L${x - 5} 162`, "#ccc");
  add(k, `M${x - 4} 153H${x + 4}V161H${x - 4}Z`, "#ccc", "#ccc");
});
[16,28,39].forEach(i => {
  const x = cx(i);
  add(k, `M${x} 150L${x + 4} 155H${x + 2}V159H${x + 4}L${x} 164L${x - 4} 159H${x - 2}V155H${x - 4}Z`, null, "#ccc");
});

const v = document.getElementById("volume");
grid(v, [899.5,961.5,1023.5]);
const volDir = "rccrccrrcrrcrrccrccrccrrrcrrcrccrrrccccr";
[899,934,967,967,973,984,999,997,998,1003,1010,1012,1012,994,1007,1012,1012,1009,1012,1004,1012,1015,1008,1012,1012,1015,1018,1018,1018,1015,1016,1017,1018,1013,1003,1013,1012,1010,1016,1003]
  .forEach((top, i) => box(v, i, volDir[i], top, 1023));
line(v, 4, [948,965,978,984.5,990.5,996.5,1001,1004.5,1007,1006,1007,1008,1008.5,1008,1011.5,1010,1010.5,1010.5,1010.5,1011,1012,1013,1015,1017,1017.5,1017.5,1017.5,1017.5,1017.5,1016,1014.5,1013.5,1012.5,1010.5,1011.5,1011.5], "#ff0");
line(v, 9, [972.5,983,991,995,998,1002,1004.5,1006.5,1007.5,1008.5,1008.5,1009,1009,1009.5,1010.5,1011.5,1012,1013,1013.5,1013.5,1014.5,1015,1016,1016.5,1016,1015.5,1015.5,1014.5,1014.5,1014,1012.5], "#f0f");

const f = document.getElementById("flow");
grid(f, [1060.5,1123.5,1186.5]);
[-112,2,1,-4,15,13,4,4,12,1,-2,1,1,-5,3,2,-1,7,4,-5,1,1,-8,3,-2,1,-1,3,1,-5,4,3,-2,-2,1,4,3,2,1,-5].forEach((h, i) => {
  const x = cx(i);
  add(f, `M${x - 14} 1172H${x + 13}V${1172 + h}H${x - 14}Z`, null, h < 0 ? "#ff0000" : "#40ffff");
});
line(f, 4, [1152.5,1177,1178.5,1178.5,1181,1179,1176.5,1175,1174,1171.5,1171.5,1172,1172,1174,1174.5,1173,1173,1174,1171.5,1171.5,1172.5,1172,1171.5,1173,1173.5,1172.5,1172.5,1172.5,1172.5,1172.5,1173,1173,1173.5,1174.5,1175,1174], "#ff0");
line(f, 9, [1165.5,1176,1176.5,1176.5,1176.5,1175,1174,1173.5,1174,1174,1173,1173,1173,1173,1173,1173,1173,1172.5,1172.5,1173,1173,1172.5,1173,1173,1172.5,1173,1173,1173,1173,1173,1173], "#f0f");
line(f, 19, [1169.5,1174,1175,1174.5,1174,1173.5,1173,1173,1173,1172.5,1172.5,1172.5,1172.5,1172.5,1172.5,1173,1173,1173.5,1173,1173,1172.5], "#0f0");
```
